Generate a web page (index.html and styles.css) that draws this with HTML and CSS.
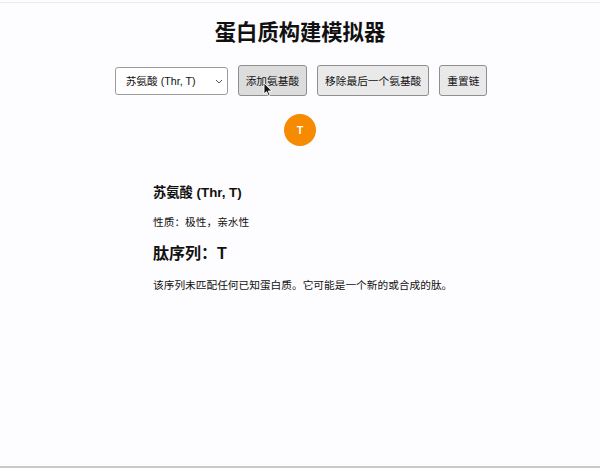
FILE: index.html
```html
<!DOCTYPE html>
<html lang="zh">
<head>
<meta charset="utf-8">
<title>蛋白质构建模拟器</title>
<link rel="stylesheet" href="styles.css">
</head>
<body>
<div class="page">
  <h1 class="title">蛋白质构建模拟器</h1>
  <div class="controls">
    <div class="select-wrap">
      <select class="aa-select">
        <option>苏氨酸 (Thr, T)</option>
      </select>
      <svg class="chev" width="8" height="5" viewBox="0 0 8 5"><path d="M1 1 L4 4 L7 1" fill="none" stroke="#555" stroke-width="1"/></svg>
    </div>
    <div class="btn-wrap">
      <button class="btn btn-hover">添加氨基酸</button>
      <svg class="cursor" width="10" height="15" viewBox="0 0 10 15"><path d="M1 1 L1 12 L3.6 9.6 L5.4 13.8 L7 13.1 L5.3 9 L8.8 9 Z" fill="#111" stroke="#fff" stroke-width="0.9" stroke-linejoin="round"/></svg>
    </div>
    <button class="btn">移除最后一个氨基酸</button>
    <button class="btn">重置链</button>
  </div>
  <div class="chain">
    <div class="residue">T</div>
  </div>
  <div class="info">
    <h3 class="aa-name">苏氨酸 (Thr, T)</h3>
    <p class="text">性质：极性，亲水性</p>
    <h2 class="seq">肽序列：T</h2>
    <p class="text">该序列未匹配任何已知蛋白质。它可能是一个新的或合成的肽。</p>
  </div>
</div>
</body>
</html>
```
FILE: styles.css
```css
* { box-sizing: border-box; }
html, body {
  margin: 0;
  padding: 0;
  background: #fdfcfe;
}
body {
  font-family: "Liberation Sans", "Noto Sans CJK SC", sans-serif;
  color: #111;
  padding-top: 2px;
}
.page {
  height: 466px;
  border-top: 1px solid #ebeaee;
  border-bottom: 2px solid #c9c9c9;
}
.title {
  margin: 15px 0 0;
  font-size: 21.3px;
  line-height: 30px;
  font-weight: 700;
  text-align: center;
}
.controls {
  margin-top: 17px;
  display: flex;
  justify-content: center;
  align-items: center;
  gap: 10px;
  padding-left: 2px;
}
.select-wrap {
  position: relative;
  width: 113px;
  height: 28px;
}
.aa-select {
  appearance: none;
  -webkit-appearance: none;
  width: 100%;
  height: 100%;
  border: 1px solid #9b9b9b;
  border-radius: 3px;
  background: #fff;
  font-family: inherit;
  font-size: 10.7px;
  color: #111;
  padding: 0 0 0 10px;
  margin: 0;
}
.chev {
  position: absolute;
  right: 5px;
  top: 12px;
}
.btn-wrap {
  position: relative;
}
.btn {
  height: 31px;
  padding: 0 7px;
  font-family: inherit;
  font-size: 10.7px;
  color: #111;
  background: #e9e9ea;
  border: 1px solid #8e8e8e;
  border-radius: 3px;
  margin: 0;
}
.btn-hover {
  background: #dcdcdd;
}
.cursor {
  position: absolute;
  left: 25px;
  top: 17px;
}
.chain {
  margin-top: 18px;
  display: flex;
  justify-content: center;
}
.residue {
  width: 32px;
  height: 32px;
  border-radius: 50%;
  background: #f68a00;
  color: #fff;
  font-weight: 700;
  font-size: 10.7px;
  display: flex;
  align-items: center;
  justify-content: center;
}
.info {
  padding-left: 153px;
  margin-top: 38px;
}
.aa-name {
  margin: 0;
  font-size: 13.3px;
  line-height: 18px;
  font-weight: 700;
}
.text {
  margin: 12px 0 0;
  font-size: 10.7px;
  line-height: 16px;
}
.seq {
  margin: 13px 0 0;
  font-size: 16px;
  line-height: 22px;
  font-weight: 700;
}
.seq + .text {
  margin-top: 12px;
}
```
